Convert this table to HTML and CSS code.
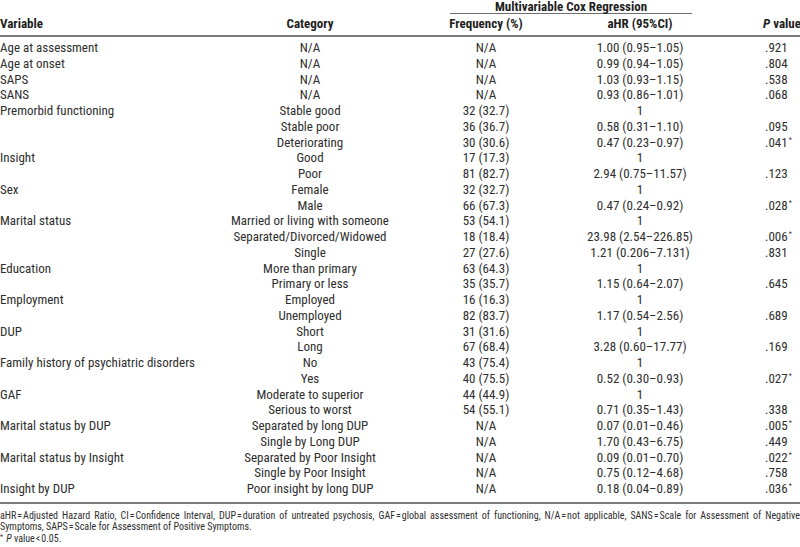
FILE: index.html
```html
<!DOCTYPE html>
<html>
<head>
<meta charset="utf-8">
<link rel="stylesheet" href="styles.css">
</head>
<body>
<table class="tbl">
  <colgroup>
    <col class="c-var"><col class="c-cat"><col class="c-freq"><col class="c-ahr"><col class="c-p">
  </colgroup>
  <thead>
    <tr class="h1">
      <th></th><th></th>
      <th colspan="2" class="span"><div class="span-inner">Multivariable Cox Regression</div></th>
      <th></th>
    </tr>
    <tr class="h2">
      <th class="left">Variable</th>
      <th>Category</th>
      <th>Frequency (%)</th>
      <th>aHR (95%CI)</th>
      <th class="pcol"><i>P</i> value</th>
    </tr>
  </thead>
  <tbody>
    <tr class="first"><td class="left">Age at assessment</td><td>N/A</td><td>N/A</td><td>1.00 (0.95–1.05)</td><td class="pcol">.921</td></tr>
    <tr><td class="left">Age at onset</td><td>N/A</td><td>N/A</td><td>0.99 (0.94–1.05)</td><td class="pcol">.804</td></tr>
    <tr><td class="left">SAPS</td><td>N/A</td><td>N/A</td><td>1.03 (0.93–1.15)</td><td class="pcol">.538</td></tr>
    <tr><td class="left">SANS</td><td>N/A</td><td>N/A</td><td>0.93 (0.86–1.01)</td><td class="pcol">.068</td></tr>
    <tr><td class="left">Premorbid functioning</td><td>Stable good</td><td>32 (32.7)</td><td>1</td><td class="pcol"></td></tr>
    <tr><td class="left"></td><td>Stable poor</td><td>36 (36.7)</td><td>0.58 (0.31–1.10)</td><td class="pcol">.095</td></tr>
    <tr><td class="left"></td><td>Deteriorating</td><td>30 (30.6)</td><td>0.47 (0.23–0.97)</td><td class="pcol">.041<sup>*</sup></td></tr>
    <tr><td class="left">Insight</td><td>Good</td><td>17 (17.3)</td><td>1</td><td class="pcol"></td></tr>
    <tr><td class="left"></td><td>Poor</td><td>81 (82.7)</td><td>2.94 (0.75–11.57)</td><td class="pcol">.123</td></tr>
    <tr><td class="left">Sex</td><td>Female</td><td>32 (32.7)</td><td>1</td><td class="pcol"></td></tr>
    <tr><td class="left"></td><td>Male</td><td>66 (67.3)</td><td>0.47 (0.24–0.92)</td><td class="pcol">.028<sup>*</sup></td></tr>
    <tr><td class="left">Marital status</td><td>Married or living with someone</td><td>53 (54.1)</td><td>1</td><td class="pcol"></td></tr>
    <tr><td class="left"></td><td>Separated/Divorced/Widowed</td><td>18 (18.4)</td><td>23.98 (2.54–226.85)</td><td class="pcol">.006<sup>*</sup></td></tr>
    <tr><td class="left"></td><td>Single</td><td>27 (27.6)</td><td>1.21 (0.206–7.131)</td><td class="pcol">.831</td></tr>
    <tr><td class="left">Education</td><td>More than primary</td><td>63 (64.3)</td><td>1</td><td class="pcol"></td></tr>
    <tr><td class="left"></td><td>Primary or less</td><td>35 (35.7)</td><td>1.15 (0.64–2.07)</td><td class="pcol">.645</td></tr>
    <tr><td class="left">Employment</td><td>Employed</td><td>16 (16.3)</td><td>1</td><td class="pcol"></td></tr>
    <tr><td class="left"></td><td>Unemployed</td><td>82 (83.7)</td><td>1.17 (0.54–2.56)</td><td class="pcol">.689</td></tr>
    <tr><td class="left">DUP</td><td>Short</td><td>31 (31.6)</td><td>1</td><td class="pcol"></td></tr>
    <tr><td class="left"></td><td>Long</td><td>67 (68.4)</td><td>3.28 (0.60–17.77)</td><td class="pcol">.169</td></tr>
    <tr><td class="left">Family history of psychiatric disorders</td><td>No</td><td>43 (75.4)</td><td>1</td><td class="pcol"></td></tr>
    <tr><td class="left"></td><td>Yes</td><td>40 (75.5)</td><td>0.52 (0.30–0.93)</td><td class="pcol">.027<sup>*</sup></td></tr>
    <tr><td class="left">GAF</td><td>Moderate to superior</td><td>44 (44.9)</td><td>1</td><td class="pcol"></td></tr>
    <tr><td class="left"></td><td>Serious to worst</td><td>54 (55.1)</td><td>0.71 (0.35–1.43)</td><td class="pcol">.338</td></tr>
    <tr><td class="left">Marital status by DUP</td><td>Separated by long DUP</td><td>N/A</td><td>0.07 (0.01–0.46)</td><td class="pcol">.005<sup>*</sup></td></tr>
    <tr><td class="left"></td><td>Single by Long DUP</td><td>N/A</td><td>1.70 (0.43–6.75)</td><td class="pcol">.449</td></tr>
    <tr><td class="left">Marital status by Insight</td><td>Separated by Poor Insight</td><td>N/A</td><td>0.09 (0.01–0.70)</td><td class="pcol">.022<sup>*</sup></td></tr>
    <tr><td class="left"></td><td>Single by Poor Insight</td><td>N/A</td><td>0.75 (0.12–4.68)</td><td class="pcol">.758</td></tr>
    <tr class="last"><td class="left">Insight by DUP</td><td>Poor insight by long DUP</td><td>N/A</td><td>0.18 (0.04–0.89)</td><td class="pcol">.036<sup>*</sup></td></tr>
  </tbody>
</table>
<div class="notes">
  <div class="note-line justify">aHR<span class="eq">=</span>Adjusted Hazard Ratio, CI<span class="eq">=</span>Confidence Interval, DUP<span class="eq">=</span>duration of untreated psychosis, GAF<span class="eq">=</span>global assessment of functioning, N/A<span class="eq">=</span>not applicable, SANS<span class="eq">=</span>Scale for Assessment of Negative</div>
  <div class="note-line">Symptoms, SAPS<span class="eq">=</span>Scale for Assessment of Positive Symptoms.</div>
  <div class="note-line"><sup class="star">*</sup> <i>P</i> value<span class="eq">&lt;</span>0.05.</div>
</div>
</body>
</html>
```

FILE: styles.css
```css
html, body {
  margin: 0;
  padding: 0;
  background: #ffffff;
}
body {
  width: 800px;
  font-family: Roboto, "Liberation Sans", Arial, sans-serif;
  font-stretch: 80%;
  color: #2e2e2e;
  font-size: 13px;
}
.tbl {
  width: 800px;
  border-collapse: collapse;
  table-layout: fixed;
}
.c-var { width: 220px; }
.c-cat { width: 180px; }
.c-freq { width: 172px; }
.c-ahr { width: 136px; }
.c-p { width: 92px; }

.tbl th {
  font-weight: bold;
  color: #1e1e1e;
  text-align: center;
  padding: 0;
  white-space: nowrap;
}
.tbl td {
  text-align: center;
  padding: 0;
  line-height: 15.75px;
  white-space: nowrap;
}
.tbl .left { text-align: left; }
.tbl .pcol { text-align: left; padding-left: 57px; }

.h1 th { line-height: 13px; }
.span-inner {
  margin: 0 16px 0 50px;
  border-bottom: 1px solid #6e6e6e;
  line-height: 13px;
}
.h2 th {
  line-height: 16px;
  padding-top: 2px;
  padding-bottom: 3px;
  border-bottom: 2px solid #7a7a7a;
}
.h2 th.pcol { padding-left: 55px; }
.first td { padding-top: 3px; }
.last td { padding-bottom: 5px; border-bottom: 2px solid #7a7a7a; }

sup {
  font-size: 7px;
  line-height: 0;
  vertical-align: 5px;
  margin-left: 1px;
}
.notes {
  margin-top: 6px;
  font-size: 10px;
  font-stretch: 80%;
  line-height: 11.5px;
}
.note-line { white-space: nowrap; }
.note-line.justify {
  white-space: normal;
  word-spacing: -1px;
  text-align: justify;
  text-align-last: justify;
}
.eq { margin: 0 1px; }
.notes .star { vertical-align: 3px; margin-left: 0; margin-right: 1px; }
```
